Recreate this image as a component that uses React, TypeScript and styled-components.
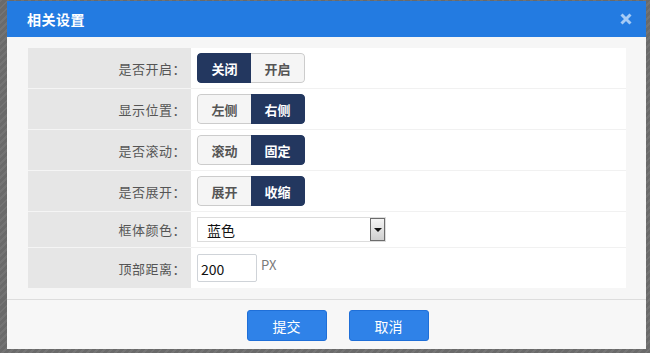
import React from 'react'
import styled, { createGlobalStyle } from 'styled-components'

const GlobalStyle = createGlobalStyle`
	*, *::before, *::after {
		box-sizing: border-box;
	}
	html, body {
		margin: 0;
		padding: 0;
		width: 650px;
		height: 353px;
		overflow: hidden;
	}
	body {
		font-family: "Noto Sans CJK SC", "Noto Sans", sans-serif;
		background-color: #6f6f6f;
		background-image: repeating-linear-gradient(135deg, #747474 0 2px, #6a6a6a 2px 5px);
	}
`

const Backdrop = styled.div`
	width: 650px;
	height: 353px;
	padding: 1px 4px 0 7px;
`

const Dialog = styled.div`
	width: 639px;
	height: 348px;
	background: #f6f6f6;
	display: flex;
	flex-direction: column;
`

const Header = styled.div`
	height: 36px;
	flex: none;
	background: #237be1;
	display: flex;
	align-items: center;
	justify-content: space-between;
	padding: 0 14px 0 20px;
	h1 {
		margin: 0;
		font-size: 14px;
		font-weight: bold;
		color: #fff;
		letter-spacing: 0.5px;
	}
`

const CloseBtn = styled.button`
	border: 0;
	background: none;
	padding: 0;
	width: 12px;
	height: 12px;
	display: flex;
	cursor: pointer;
`

const Body = styled.div`
	padding: 11px 20px 11px 21px;
	border-bottom: 1px solid #dddddd;
`

const Table = styled.div`
	background: #fff;
	display: grid;
	grid-template-columns: 163px 1fr;
`

const Label = styled.div<{ $h: number; $last?: boolean }>`
	height: ${p => p.$h}px;
	background: #e6e6e6;
	border-bottom: ${p => (p.$last ? 'none' : '1px solid #f5f5f5')};
	display: flex;
	align-items: center;
	justify-content: flex-end;
	padding-right: 5px;
	font-size: 13px;
	color: #555;
	letter-spacing: 0.5px;
`

const Cell = styled.div<{ $h: number; $last?: boolean }>`
	height: ${p => p.$h}px;
	border-bottom: ${p => (p.$last ? 'none' : '1px solid #f1f1f1')};
	display: flex;
	align-items: center;
	padding-left: 6px;
	gap: 4px;
`

const Segment = styled.div`
	display: flex;
	height: 30px;
	width: 108px;
	border-radius: 4px;
	overflow: hidden;
`

const SegBtn = styled.button<{ $on: boolean; $side: 'l' | 'r' }>`
	flex: 1;
	border: ${p => (p.$on ? '1px solid #23375f' : '1px solid #cccccc')};
	${p => (p.$side === 'l' ? 'border-right: none;' : 'border-left: none;')}
	${p => (p.$side === 'l' ? 'border-radius: 4px 0 0 4px;' : 'border-radius: 0 4px 4px 0;')}
	background: ${p => (p.$on ? '#23375f' : '#f5f5f5')};
	color: ${p => (p.$on ? '#fff' : '#555')};
	font-family: inherit;
	font-size: 13px;
	font-weight: bold;
	padding: 0;
	cursor: pointer;
`

const SelectBox = styled.div`
	width: 189px;
	height: 25px;
	border: 1px solid #dcdcdc;
	display: flex;
	align-items: center;
	justify-content: space-between;
	padding: 0 0 0 9px;
	font-size: 14px;
	color: #111;
`

const Arrow = styled.span`
	width: 15px;
	height: 23px;
	border: 1px solid #6c6c6c;
	background: linear-gradient(#f4f4f4, #cfcfcf);
	display: flex;
	align-items: center;
	justify-content: center;
	&::after {
		content: '';
		border-left: 4px solid transparent;
		border-right: 4px solid transparent;
		border-top: 4px solid #111;
	}
`

const NumInput = styled.input`
	width: 60px;
	height: 28px;
	border: 1px solid #cfd3d8;
	border-radius: 2px;
	padding: 2px 0 0 3px;
	font-family: inherit;
	font-size: 14px;
	color: #111;
	outline: none;
`

const Unit = styled.span`
	font-size: 13px;
	color: #7a7a7a;
	margin-bottom: 8px;
`

const Footer = styled.div`
	flex: 1;
	background: #f7f7f7;
	display: flex;
	justify-content: center;
	gap: 22px;
	padding: 10px 0 0 22px;
`

const ActionBtn = styled.button`
	width: 80px;
	height: 31px;
	border: 1px solid #1f6fd8;
	border-radius: 3px;
	background: #2f82e8;
	color: #fff;
	font-family: inherit;
	font-size: 14px;
	cursor: pointer;
`

const toggles = [
	{ label: '是否开启：', opts: ['关闭', '开启'], on: 0 },
	{ label: '显示位置：', opts: ['左侧', '右侧'], on: 1 },
	{ label: '是否滚动：', opts: ['滚动', '固定'], on: 1 },
	{ label: '是否展开：', opts: ['展开', '收缩'], on: 1 },
]

export default function App() {
	return (
		<>
			<GlobalStyle />
			<Backdrop>
				<Dialog>
					<Header>
						<h1>相关设置</h1>
						<CloseBtn aria-label="关闭">
							<svg width="12" height="12" viewBox="0 0 12 12">
								<path d="M1.5 1.5 L10.5 10.5 M10.5 1.5 L1.5 10.5" stroke="#a6cbf5" strokeWidth="3" />
							</svg>
						</CloseBtn>
					</Header>
					<Body>
						<Table>
							{toggles.map(t => (
								<React.Fragment key={t.label}>
									<Label $h={41}>{t.label}</Label>
									<Cell $h={41}>
										<Segment>
											{t.opts.map((o, i) => (
												<SegBtn key={o} $on={i === t.on} $side={i === 0 ? 'l' : 'r'}>{o}</SegBtn>
											))}
										</Segment>
									</Cell>
								</React.Fragment>
							))}
							<Label $h={36}>框体颜色：</Label>
							<Cell $h={36}>
								<SelectBox>
									<span>蓝色</span>
									<Arrow />
								</SelectBox>
							</Cell>
							<Label $h={40} $last>顶部距离：</Label>
							<Cell $h={40} $last>
								<NumInput defaultValue="200" />
								<Unit>PX</Unit>
							</Cell>
						</Table>
					</Body>
					<Footer>
						<ActionBtn>提交</ActionBtn>
						<ActionBtn>取消</ActionBtn>
					</Footer>
				</Dialog>
			</Backdrop>
		</>
	)
}
